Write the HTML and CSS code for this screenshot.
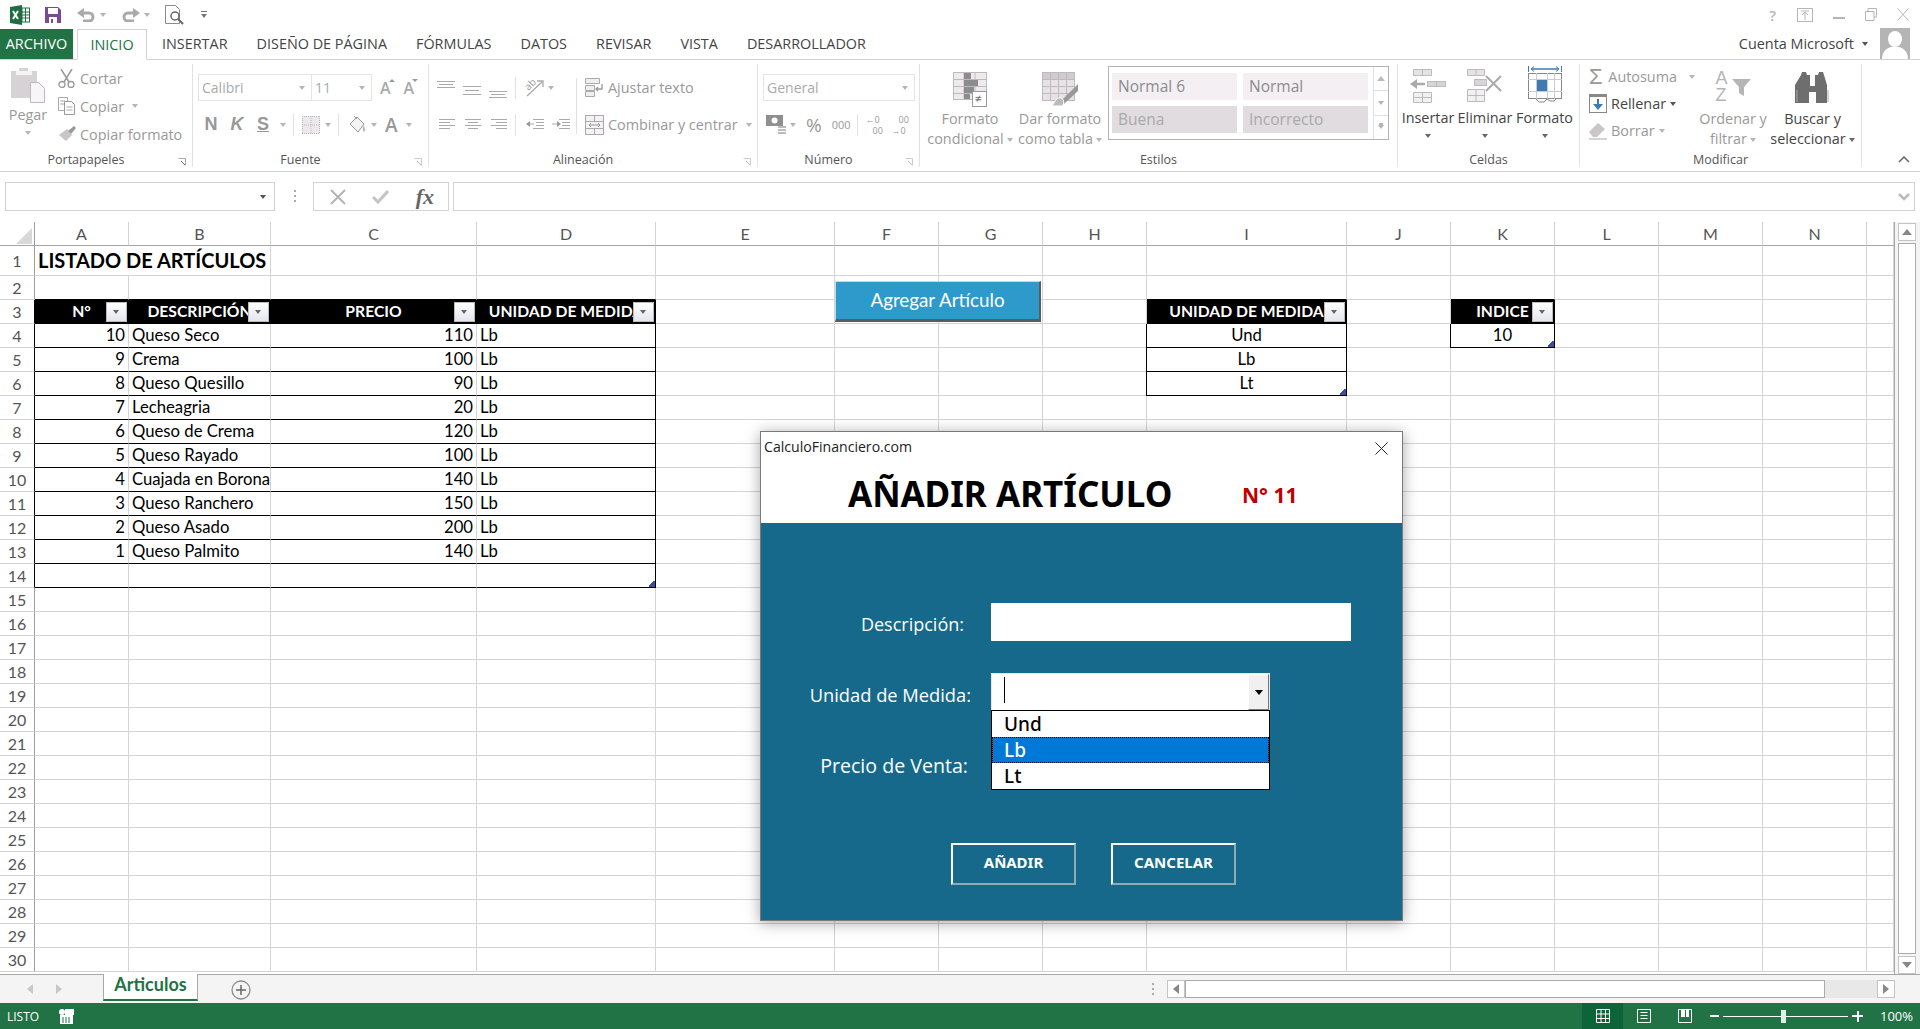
FILE: index.html
```html
<!DOCTYPE html>
<html lang="es">
<head>
    <meta charset="UTF-8">
    <title>Listado de Artículos - Excel</title>
    <link rel="stylesheet" href="styles.css">
</head>
<body>
    <!-- barra de titulo -->
    <div class="titlebar">
        <svg class="ml10" width="20" height="20" viewBox="0 0 20 20"><polygon points="0,2 12,0 12,20 0,18" fill="#1f6e43"/><rect x="12" y="3" width="7.5" height="14" fill="#fff" stroke="#1f6e43"/><path d="M12 7h7M12 10h7M12 13h7M15.500 3v14" stroke="#1f6e43"/><path d="M3 6l5 8M8 6l-5 8" stroke="#fff" stroke-width="2"/></svg>
        <svg class="ml15" width="16" height="16" viewBox="0 0 16 16"><path d="M0 0h13l3 3v13H0z" fill="#7a4b94"/><rect x="3" y="1" width="10" height="6" fill="#fff"/><rect x="4" y="10" width="8" height="6" fill="#fff"/><rect x="6" y="12" width="2" height="4" fill="#7a4b94"/></svg>
        <svg class="ml16" width="19" height="14" viewBox="0 0 19 14"><path d="M3 5h9a4 4 0 0 1 0 8H6" fill="none" stroke="#aaa" stroke-width="3"/><polygon points="0,5 7,0 7,10" fill="#aaa"/></svg>
        <span class="caret ml4"></span>
        <svg class="ml15" width="19" height="14" viewBox="0 0 19 14"><path d="M16 5H7a4 4 0 0 0 0 8h6" fill="none" stroke="#aaa" stroke-width="3"/><polygon points="19,5 12,0 12,10" fill="#aaa"/></svg>
        <span class="caret ml4"></span>
        <svg class="ml15" width="20" height="20" viewBox="0 0 20 20"><path d="M.500 .500h10l4 4v14H.500z" fill="#fff" stroke="#8c8c8c"/><circle cx="10" cy="11" r="4" fill="#fff" stroke="#666" stroke-width="1.500"/><path d="M13 14l5 5" stroke="#666" stroke-width="2"/></svg>
        <svg class="ml15" width="8" height="9" viewBox="0 0 8 9"><path d="M1 1.500h6" stroke="#777"/><polygon points="1,4 7,4 4,8" fill="#777"/></svg>
        <div class="window-btns">
            <span class="help">?</span>
            <svg width="16" height="14" viewBox="0 0 16 14"><rect x=".500" y=".500" width="15" height="13" fill="none" stroke="#b5b5b5"/><path d="M4 3h8M8 4v8M5 7l3-3 3 3" fill="none" stroke="#b5b5b5"/></svg>
            <svg width="12" height="14" viewBox="0 0 12 14"><path d="M0 10h12" stroke="#b5b5b5" stroke-width="2"/></svg>
            <svg width="12" height="13" viewBox="0 0 12 13"><path d="M3 3V.500h8.500V9H9M.500 3.500H9v9H.500z" fill="none" stroke="#b5b5b5"/></svg>
            <svg width="12" height="13" viewBox="0 0 12 13"><path d="M.500 .500l11 12M11.500 .500l-11 12" stroke="#b5b5b5"/></svg>
        </div>
    </div>

    <!-- pestañas de la cinta -->
    <div class="tabs">
        <div class="tab-file">ARCHIVO</div>
        <div class="tab-active">INICIO</div>
        <div class="tab-list">
            <span>INSERTAR</span>
            <span>DISEÑO DE PÁGINA</span>
            <span>FÓRMULAS</span>
            <span>DATOS</span>
            <span>REVISAR</span>
            <span>VISTA</span>
            <span>DESARROLLADOR</span>
        </div>
        <div class="account">
            <span>Cuenta Microsoft</span>
            <span class="caret dark"></span>
            <svg class="avatar" width="30" height="31" viewBox="0 0 30 31"><rect width="30" height="31" fill="#b4b4b4"/><ellipse cx="15" cy="11" rx="7" ry="8" fill="#fff"/><path d="M2 31c0-8 5-11 9-12h8c4 1 9 4 9 12z" fill="#fff"/></svg>
        </div>
    </div>

    <!-- cinta -->
    <div class="ribbon">
        <div class="group g-clip">
            <div class="group-body">
                <div class="big pegar">
                    <svg width="34" height="35" viewBox="0 0 34 35"><path d="M0 3h8V0h9v3h9v27H0z" fill="#d6d2d6"/><rect x="5" y="3" width="16" height="4" fill="#f4f4f4"/><path d="M19.500 14.500h8l6 6v14h-14z" fill="#f7f5f7" stroke="#bdb9bd"/></svg>
                    <div class="lbl">Pegar</div>
                    <span class="caret cap-big"></span>
                </div>
                <div class="clip-rows">
                    <div class="clip-row">
                        <svg width="17" height="19" viewBox="0 0 17 19"><path d="M3 0l8 13M14 0L6 13" stroke="#999" stroke-width="1.500"/><circle cx="4" cy="15.500" r="3" fill="none" stroke="#999" stroke-width="1.300"/><circle cx="13" cy="15.500" r="3" fill="none" stroke="#999" stroke-width="1.300"/></svg>
                        <span>Cortar</span>
                    </div>
                    <div class="clip-row">
                        <svg width="17" height="18" viewBox="0 0 17 18"><path d="M.500 .500h9v13h-9z" fill="#fff" stroke="#aaa"/><path d="M6.500 4.500h7l3 3v10h-10z" fill="#fff" stroke="#999"/><path d="M2 4h5M2 7h4M8.500 10h6M8.500 13h6" stroke="#aaa"/></svg>
                        <span>Copiar</span><span class="caret ml8"></span>
                    </div>
                    <div class="clip-row">
                        <svg width="20" height="16" viewBox="0 0 20 16"><polygon points="1,10 9,4 14,10 8,16" fill="#c9c5c9"/><path d="M10 6l6-5 2 2-5 6z" fill="#999"/></svg>
                        <span>Copiar formato</span>
                    </div>
                </div>
            </div>
            <div class="group-name launch">Portapapeles<svg class="launcher" width="8" height="8" viewBox="0 0 8 8"><path d="M.500 .500h7v7" fill="none" stroke="#aaa"/><path d="M3 3l4 4" stroke="#666"/></svg></div>
        </div>

        <div class="group g-font">
            <div class="group-body rows">
                <div class="row">
                    <div class="select font-name">Calibri<span class="caret"></span></div>
                    <div class="select font-size">11<span class="caret"></span></div>
                    <span class="grow-a ml8">A<i class="up"></i></span>
                    <span class="grow-a small ml13">A<i class="down"></i></span>
                </div>
                <div class="row">
                    <b class="fmt">N</b>
                    <b class="fmt it">K</b>
                    <b class="fmt un">S</b>
                    <span class="caret ml4"></span>
                    <span class="vsep sep-a"></span>
                    <svg class="ml8" width="18" height="18" viewBox="0 0 18 18"><rect width="18" height="18" fill="#ece8ec"/><path d="M.500 0v18M17.500 0v18M0 .500h18M0 17.500h18M9 0v18M0 9h18" stroke="#bbb" stroke-dasharray="1 1"/></svg>
                    <span class="caret ml5"></span>
                    <span class="vsep sep-b"></span>
                    <svg class="ml10" width="18" height="20" viewBox="0 0 18 20"><path d="M1 9l7-7 7 7-6 8z" fill="#f4f4f4" stroke="#999"/><path d="M5 1l3 3" stroke="#999"/><path d="M14 10c2 3 3 4 2 6s-3 0-2-6z" fill="#bbb"/></svg>
                    <span class="caret ml4"></span>
                    <span class="big-a ml8">A</span>
                    <span class="caret ml8"></span>
                </div>
            </div>
            <div class="group-name launch">Fuente<svg class="launcher" width="8" height="8" viewBox="0 0 8 8"><path d="M.500 .500h7v7" fill="none" stroke="#ccc"/><path d="M3 3l4 4" stroke="#bbb"/></svg></div>
        </div>

        <div class="group g-align">
            <div class="group-body">
                <div class="align-left rows">
                    <div class="row">
                        <svg width="18" height="22" viewBox="0 0 18 22"><path d="M0 4.500h18M2 7.500h14M0 10.500h18" stroke="#aaa"/></svg>
                        <svg class="ml8" width="18" height="22" viewBox="0 0 18 22"><path d="M0 9.500h18M2 13.500h14M0 17.500h18" stroke="#aaa"/></svg>
                        <svg class="ml8" width="18" height="22" viewBox="0 0 18 22"><path d="M0 14.500h18M2 17.500h14M0 20.500h18" stroke="#aaa"/></svg>
                        <span class="vsep ml8"></span>
                        <div class="orient ml8">
                            <svg width="20" height="20" viewBox="0 0 20 20"><path d="M3 18L18 4M13 3h6v6" fill="none" stroke="#aaa" stroke-width="1.300"/></svg>
                            <span>ab</span>
                        </div>
                        <span class="caret ml4"></span>
                    </div>
                    <div class="row row-2">
                        <svg class="ml2" width="16" height="14" viewBox="0 0 16 14"><path d="M0 1.500h16M0 4.500h11M0 7.500h16M0 10.500h11" stroke="#aaa"/></svg>
                        <svg class="ml10" width="16" height="14" viewBox="0 0 16 14"><path d="M0 1.500h16M3 4.500h10M0 7.500h16M3 10.500h10" stroke="#aaa"/></svg>
                        <svg class="ml10" width="16" height="14" viewBox="0 0 16 14"><path d="M0 1.500h16M5 4.500h11M0 7.500h16M5 10.500h11" stroke="#aaa"/></svg>
                        <span class="vsep ml8"></span>
                        <svg class="ml10" width="18" height="14" viewBox="0 0 18 14"><path d="M7 1.500h11M10 4.500h8M10 7.500h8M7 10.500h11M1 6h7" stroke="#aaa"/><polygon points="0,6 4,3 4,9" fill="#999"/></svg>
                        <svg class="ml8" width="18" height="14" viewBox="0 0 18 14"><path d="M7 1.500h11M10 4.500h8M10 7.500h8M7 10.500h11M0 6h7" stroke="#aaa"/><polygon points="9,6 5,3 5,9" fill="#999"/></svg>
                    </div>
                </div>
                <span class="vsep tall"></span>
                <div class="align-right rows">
                    <div class="row">
                        <svg width="19" height="19" viewBox="0 0 19 19"><path d="M.500 .500h14v5h-14zM.500 7.500h9v5h-9zM.500 13.500h9v5h-9z" fill="#f0eef0" stroke="#aaa"/><path d="M17 6v5h-6M13 9l-2 2 2 2" fill="none" stroke="#999" stroke-width="1.300"/></svg>
                        <span class="ml4">Ajustar texto</span>
                    </div>
                    <div class="row row-2">
                        <svg width="19" height="20" viewBox="0 0 19 20"><rect x=".500" y=".500" width="18" height="19" fill="#f4f2f4" stroke="#aaa"/><path d="M0 6.500h19M0 13.500h19M9.500 0v6M9.500 14v6" stroke="#aaa"/><path d="M4 10h11M6 8l-2 2 2 2M13 8l2 2-2 2" fill="none" stroke="#999"/></svg>
                        <span class="ml4">Combinar y centrar</span>
                        <span class="caret ml8"></span>
                    </div>
                </div>
            </div>
            <div class="group-name launch">Alineación<svg class="launcher" width="8" height="8" viewBox="0 0 8 8"><path d="M.500 .500h7v7" fill="none" stroke="#ccc"/><path d="M3 3l4 4" stroke="#bbb"/></svg></div>
        </div>

        <div class="group g-num">
            <div class="group-body rows">
                <div class="row">
                    <div class="select num-format">General<span class="caret"></span></div>
                </div>
                <div class="row">
                    <svg class="ml3" width="20" height="20" viewBox="0 0 20 20"><rect width="17" height="11" fill="#8f8f8f"/><circle cx="8.500" cy="5.500" r="3" fill="#fff"/><path d="M12 12h8M12 15h8M12 18h8" stroke="#bbb" stroke-width="2"/></svg>
                    <span class="caret ml4"></span>
                    <span class="pct ml10">%</span>
                    <span class="thou ml10">000</span>
                    <span class="vsep ml6"></span>
                    <span class="dec ml8"><i>←0</i><i class="push">00</i></span>
                    <span class="dec ml6"><i class="push">00</i><i>→0</i></span>
                </div>
            </div>
            <div class="group-name launch">Número<svg class="launcher" width="8" height="8" viewBox="0 0 8 8"><path d="M.500 .500h7v7" fill="none" stroke="#ccc"/><path d="M3 3l4 4" stroke="#bbb"/></svg></div>
        </div>

        <div class="group g-styles">
            <div class="group-body">
                <div class="big cond">
                    <div class="cond-ico">
                        <svg width="34" height="35" viewBox="0 0 34 35"><rect x=".500" y=".500" width="33" height="27" fill="#eeeaee" stroke="#bdb9bd"/><path d="M0 7.500h34M0 14.500h34M0 21.500h34M11 0v28M22 0v28" stroke="#bdb9bd"/><rect x="11" y="1" width="7" height="6" fill="#8c8c8c"/><rect x="11" y="8" width="14" height="6" fill="#8c8c8c"/><rect x="11" y="15" width="10" height="6" fill="#8c8c8c"/><rect x="11" y="22" width="6" height="5" fill="#8c8c8c"/><rect x="19.500" y="19.500" width="14" height="15" fill="#fff" stroke="#999"/></svg>
                        <span>≠</span>
                    </div>
                    <div class="lbl">Formato</div>
                    <div class="lbl">condicional<span class="caret ml3"></span></div>
                </div>
                <div class="big dar">
                    <svg width="37" height="35" viewBox="0 0 37 35"><rect x=".500" y=".500" width="32" height="28" fill="#e6e2e6" stroke="#bdb9bd"/><rect x="1" y="1" width="31" height="6" fill="#cfcbcf"/><path d="M0 7.500h33M0 14.500h33M0 21.500h33M8.500 0v29M16.500 0v29M24.500 0v29" stroke="#bdb9bd"/><path d="M36 12L19 29l3 3 14-13z" fill="#999"/><path d="M10 34c4-6 5-9 9-8 4 2 3 6 1 8z" fill="#bbb" stroke="#fff"/></svg>
                    <div class="lbl">Dar formato</div>
                    <div class="lbl">como tabla<span class="caret ml3"></span></div>
                </div>
                <div class="gallery">
                    <div class="style-grid">
                        <div class="style-cell">Normal 6</div>
                        <div class="style-cell">Normal</div>
                        <div class="style-cell shade">Buena</div>
                        <div class="style-cell shade">Incorrecto</div>
                    </div>
                    <div class="gallery-scroll">
                        <span><i class="tri-up"></i></span>
                        <span><i class="caret"></i></span>
                        <span><i class="caret lined"></i></span>
                    </div>
                </div>
            </div>
            <div class="group-name">Estilos</div>
        </div>

        <div class="group g-cells">
            <div class="group-body">
                <div class="big ins dark-text">
                    <svg width="36" height="34" viewBox="0 0 36 34"><path d="M3.500 .500h18v6h-18zM12.500 0v6" fill="#e6e2e6" stroke="#bbb"/><rect x="17.500" y="12.500" width="18" height="5" fill="#d8d4d8" stroke="#bbb"/><path d="M26.500 12v6" stroke="#bbb"/><path d="M15 15H3" stroke="#aaa" stroke-width="2.500"/><polygon points="0,15 7,10 7,20" fill="#aaa"/><path d="M3.500 23.500h18v10h-18zM3.500 28.500h18M12.500 23v11" fill="#f2f0f2" stroke="#bbb"/></svg>
                    <div class="lbl">Insertar</div>
                    <span class="caret mid"></span>
                </div>
                <div class="big eli dark-text">
                    <svg width="36" height="34" viewBox="0 0 36 34"><path d="M.500 .500h17v6h-17zM9 0v6" fill="#e6e2e6" stroke="#bbb"/><rect x="7.500" y="10.500" width="12" height="6" fill="#d8d4d8" stroke="#bbb"/><path d="M.500 20.500h17v12h-17zM.500 26.500h17M9 20v12" fill="#f2f0f2" stroke="#bbb"/><path d="M19 7l15 15M34 7L19 22" stroke="#aaa" stroke-width="2"/></svg>
                    <div class="lbl">Eliminar</div>
                    <span class="caret mid"></span>
                </div>
                <div class="big fmtb dark-text">
                    <svg width="34" height="38" viewBox="0 0 34 38"><path d="M.500 1v6M33.500 1v6" stroke="#3f7ab3"/><path d="M4 4h26" stroke="#3f7ab3" stroke-width="1.500"/><path d="M6 1.500L3 4l3 2.500M28 1.500L31 4l-3 2.500" fill="none" stroke="#3f7ab3"/><rect x=".500" y="8.500" width="33" height="25" fill="#fff" stroke="#888"/><path d="M0 14.500h34M0 26.500h34M8.500 8v26M19.500 8v26M26.500 8v26" stroke="#ccc"/><rect x="9" y="15" width="10" height="11" fill="#3f7ab3"/><path d="M8 34l3 3h5l3-3M19 34l3 2h4l2-2" fill="none" stroke="#888"/></svg>
                    <div class="lbl">Formato</div>
                    <span class="caret mid"></span>
                </div>
            </div>
            <div class="group-name">Celdas</div>
        </div>

        <div class="group g-edit">
            <div class="group-body">
                <div class="edit-rows">
                    <div class="edit-row edit-off">
                        <span class="sigma">Σ</span>
                        <span>Autosuma</span><span class="caret ml8"></span>
                    </div>
                    <div class="edit-row edit-on">
                        <svg width="18" height="19" viewBox="0 0 18 19"><rect x=".500" y=".500" width="17" height="18" fill="#fff" stroke="#888"/><rect y="0" width="18" height="3" fill="#888"/><path d="M9 5v9" stroke="#3f7ab3" stroke-width="2"/><polygon points="4,10 14,10 9,16" fill="#3f7ab3"/></svg>
                        <span>Rellenar</span><span class="caret dark"></span>
                    </div>
                    <div class="edit-row edit-off">
                        <svg width="18" height="18" viewBox="0 0 18 18"><path d="M0 10L9 1l7 6-8 8H4z" fill="#c9c5c9"/><path d="M0 17h18" stroke="#aaa"/></svg>
                        <span>Borrar</span><span class="caret"></span>
                    </div>
                </div>
                <div class="big sort">
                    <div class="az-ico">
                        <div class="az"><span>A</span><span>Z</span></div>
                        <svg width="19" height="17" viewBox="0 0 19 17"><polygon points="0,0 19,0 12,8 12,17 7,14 7,8" fill="#b5b5b5"/></svg>
                    </div>
                    <div class="lbl">Ordenar y</div>
                    <div class="lbl">filtrar<span class="caret ml3"></span></div>
                </div>
                <div class="big find dark-text">
                    <svg width="35" height="33" viewBox="0 0 35 33"><path d="M6 5l1-3h4l1 3h3v11h5V5h3l1-3h4l1 3 3 10v18H21V22h-7v11H0V15z" fill="#6e6e6e"/><path d="M2 20v12M33 20v12" stroke="#aaa"/></svg>
                    <div class="lbl">Buscar y</div>
                    <div class="lbl">seleccionar<span class="caret dark ml3"></span></div>
                </div>
            </div>
            <div class="group-name">Modificar</div>
        </div>

        <svg class="collapse" width="12" height="7" viewBox="0 0 12 7"><path d="M1 6l5-5 5 5" fill="none" stroke="#666" stroke-width="1.500"/></svg>
    </div>

    <!-- barra de formulas -->
    <div class="formula-bar">
        <div class="name-box"><span class="caret dark"></span></div>
        <span class="vdots"></span>
        <div class="fx-box">
            <svg width="16" height="16" viewBox="0 0 16 16"><path d="M1 1l14 14M15 1L1 15" stroke="#b5b5b5" stroke-width="2"/></svg>
            <svg width="17" height="15" viewBox="0 0 17 15"><path d="M1 8l5 5L16 2" fill="none" stroke="#c4c4c4" stroke-width="3"/></svg>
            <span class="fx">fx</span>
        </div>
        <div class="formula-input">
            <svg width="12" height="8" viewBox="0 0 12 8"><path d="M1 1l5 5 5-5" fill="none" stroke="#bbb" stroke-width="2.500"/></svg>
        </div>
    </div>

    <!-- hoja -->
    <div class="sheet">
        <div class="grid-wrap">
            <table class="grid">
                <colgroup>
                    <col class="c-head"><col class="c-a"><col class="c-b"><col class="c-c"><col class="c-d"><col class="c-e"><col class="c-f"><col class="c-f"><col class="c-f"><col class="c-i"><col class="c-f"><col class="c-f"><col class="c-f"><col class="c-f"><col class="c-f"><col class="c-o">
                </colgroup>
                <thead>
                    <tr>
                        <th class="corner"><svg width="16" height="16" viewBox="0 0 16 16"><polygon points="16,0 16,16 0,16" fill="#d8d8d8"/></svg></th>
                        <th>A</th><th>B</th><th>C</th><th>D</th><th>E</th><th>F</th><th>G</th><th>H</th><th>I</th><th>J</th><th>K</th><th>L</th><th>M</th><th>N</th><th></th>
                    </tr>
                </thead>
                <tbody>
                    <tr class="r-title"><th>1</th><td colspan="2" class="title">LISTADO DE ARTÍCULOS</td><td></td><td></td><td></td><td></td><td></td><td></td><td></td><td></td><td></td><td></td><td></td><td></td><td></td></tr>
                    <tr><th>2</th><td class="bk"></td><td class="bk"></td><td class="bk"></td><td class="bk"></td><td></td><td></td><td></td><td></td><td class="bk"></td><td></td><td class="bk"></td><td></td><td></td><td></td><td></td></tr>
                    <tr><th class="edge">3</th><td class="hd">N°<span class="filter"></span></td><td class="hd">DESCRIPCIÓN<span class="filter"></span></td><td class="hd">PRECIO<span class="filter"></span></td><td class="hd">UNIDAD DE MEDIDA<span class="filter"></span></td><td></td><td></td><td></td><td></td><td class="hd">UNIDAD DE MEDIDA<span class="filter"></span></td><td></td><td class="hd">INDICE<span class="filter"></span></td><td></td><td></td><td></td><td></td></tr>
                    <tr><th class="edge">4</th><td class="bk n">10</td><td class="bk">Queso Seco</td><td class="bk n">110</td><td class="bk br">Lb</td><td></td><td></td><td></td><td></td><td class="bk br bl ctr">Und</td><td></td><td class="bk br bl ctr grip">10</td><td></td><td></td><td></td><td></td></tr>
                    <tr><th class="edge">5</th><td class="bk n">9</td><td class="bk">Crema</td><td class="bk n">100</td><td class="bk br">Lb</td><td></td><td></td><td></td><td></td><td class="bk br bl ctr">Lb</td><td></td><td></td><td></td><td></td><td></td><td></td></tr>
                    <tr><th class="edge">6</th><td class="bk n">8</td><td class="bk">Queso Quesillo</td><td class="bk n">90</td><td class="bk br">Lb</td><td></td><td></td><td></td><td></td><td class="bk br bl ctr grip">Lt</td><td></td><td></td><td></td><td></td><td></td><td></td></tr>
                    <tr><th class="edge">7</th><td class="bk n">7</td><td class="bk">Lecheagria</td><td class="bk n">20</td><td class="bk br">Lb</td><td></td><td></td><td></td><td></td><td></td><td></td><td></td><td></td><td></td><td></td><td></td></tr>
                    <tr><th class="edge">8</th><td class="bk n">6</td><td class="bk">Queso de Crema</td><td class="bk n">120</td><td class="bk br">Lb</td><td></td><td></td><td></td><td></td><td></td><td></td><td></td><td></td><td></td><td></td><td></td></tr>
                    <tr><th class="edge">9</th><td class="bk n">5</td><td class="bk">Queso Rayado</td><td class="bk n">100</td><td class="bk br">Lb</td><td></td><td></td><td></td><td></td><td></td><td></td><td></td><td></td><td></td><td></td><td></td></tr>
                    <tr><th class="edge">10</th><td class="bk n">4</td><td class="bk">Cuajada en Borona</td><td class="bk n">140</td><td class="bk br">Lb</td><td></td><td></td><td></td><td></td><td></td><td></td><td></td><td></td><td></td><td></td><td></td></tr>
                    <tr><th class="edge">11</th><td class="bk n">3</td><td class="bk">Queso Ranchero</td><td class="bk n">150</td><td class="bk br">Lb</td><td></td><td></td><td></td><td></td><td></td><td></td><td></td><td></td><td></td><td></td><td></td></tr>
                    <tr><th class="edge">12</th><td class="bk n">2</td><td class="bk">Queso Asado</td><td class="bk n">200</td><td class="bk br">Lb</td><td></td><td></td><td></td><td></td><td></td><td></td><td></td><td></td><td></td><td></td><td></td></tr>
                    <tr><th class="edge">13</th><td class="bk n">1</td><td class="bk">Queso Palmito</td><td class="bk n">140</td><td class="bk br">Lb</td><td></td><td></td><td></td><td></td><td></td><td></td><td></td><td></td><td></td><td></td><td></td></tr>
                    <tr><th class="edge">14</th><td class="bk"></td><td class="bk"></td><td class="bk"></td><td class="bk br grip"></td><td></td><td></td><td></td><td></td><td></td><td></td><td></td><td></td><td></td><td></td><td></td></tr>
                    <tr><th>15</th><td></td><td></td><td></td><td></td><td></td><td></td><td></td><td></td><td></td><td></td><td></td><td></td><td></td><td></td><td></td></tr>
                    <tr><th>16</th><td></td><td></td><td></td><td></td><td></td><td></td><td></td><td></td><td></td><td></td><td></td><td></td><td></td><td></td><td></td></tr>
                    <tr><th>17</th><td></td><td></td><td></td><td></td><td></td><td></td><td></td><td></td><td></td><td></td><td></td><td></td><td></td><td></td><td></td></tr>
                    <tr><th>18</th><td></td><td></td><td></td><td></td><td></td><td></td><td></td><td></td><td></td><td></td><td></td><td></td><td></td><td></td><td></td></tr>
                    <tr><th>19</th><td></td><td></td><td></td><td></td><td></td><td></td><td></td><td></td><td></td><td></td><td></td><td></td><td></td><td></td><td></td></tr>
                    <tr><th>20</th><td></td><td></td><td></td><td></td><td></td><td></td><td></td><td></td><td></td><td></td><td></td><td></td><td></td><td></td><td></td></tr>
                    <tr><th>21</th><td></td><td></td><td></td><td></td><td></td><td></td><td></td><td></td><td></td><td></td><td></td><td></td><td></td><td></td><td></td></tr>
                    <tr><th>22</th><td></td><td></td><td></td><td></td><td></td><td></td><td></td><td></td><td></td><td></td><td></td><td></td><td></td><td></td><td></td></tr>
                    <tr><th>23</th><td></td><td></td><td></td><td></td><td></td><td></td><td></td><td></td><td></td><td></td><td></td><td></td><td></td><td></td><td></td></tr>
                    <tr><th>24</th><td></td><td></td><td></td><td></td><td></td><td></td><td></td><td></td><td></td><td></td><td></td><td></td><td></td><td></td><td></td></tr>
                    <tr><th>25</th><td></td><td></td><td></td><td></td><td></td><td></td><td></td><td></td><td></td><td></td><td></td><td></td><td></td><td></td><td></td></tr>
                    <tr><th>26</th><td></td><td></td><td></td><td></td><td></td><td></td><td></td><td></td><td></td><td></td><td></td><td></td><td></td><td></td><td></td></tr>
                    <tr><th>27</th><td></td><td></td><td></td><td></td><td></td><td></td><td></td><td></td><td></td><td></td><td></td><td></td><td></td><td></td><td></td></tr>
                    <tr><th>28</th><td></td><td></td><td></td><td></td><td></td><td></td><td></td><td></td><td></td><td></td><td></td><td></td><td></td><td></td><td></td></tr>
                    <tr><th>29</th><td></td><td></td><td></td><td></td><td></td><td></td><td></td><td></td><td></td><td></td><td></td><td></td><td></td><td></td><td></td></tr>
                    <tr><th>30</th><td></td><td></td><td></td><td></td><td></td><td></td><td></td><td></td><td></td><td></td><td></td><td></td><td></td><td></td><td></td></tr>
                </tbody>
            </table>
            <div class="shape-btn">Agregar Artículo</div>
        </div>
        <div class="vscroll">
            <span class="sb-btn"><i class="tri-up"></i></span>
            <span class="sb-thumb"></span>
            <span class="sb-btn"><i class="tri-down"></i></span>
        </div>
    </div>

    <!-- pestañas de hojas -->
    <div class="sheet-tabs">
        <i class="nav-left"></i>
        <i class="nav-right"></i>
        <div class="sheet-tab">Articulos</div>
        <svg class="add-sheet" width="20" height="20" viewBox="0 0 20 20"><circle cx="10" cy="10" r="9" fill="none" stroke="#8c8c8c" stroke-width="1.300"/><path d="M10 5v10M5 10h10" stroke="#666" stroke-width="1.500"/></svg>
        <span class="vdots tab-dots"></span>
        <div class="hscroll">
            <span class="sb-btn"><i class="tri-left"></i></span>
            <span class="hs-thumb"></span>
            <span class="sb-btn"><i class="tri-right"></i></span>
        </div>
    </div>

    <!-- barra de estado -->
    <div class="statusbar">
        <span class="ready">LISTO</span>
        <svg class="ml20" width="15" height="15" viewBox="0 0 15 15"><circle cx="3" cy="3" r="3" fill="#fff"/><path d="M0 6h15V0H6v6" fill="#fff"/><rect x="1" y="6" width="13" height="9" fill="#fff"/><path d="M3 9h9M3 11h9M3 13h9" stroke="#217346" stroke-dasharray="2 1"/></svg>
        <div class="status-right">
            <span class="view-btn on"><svg width="14" height="14" viewBox="0 0 14 14"><path d="M.500 .500h13v13H.500zM.500 5h13M.500 9.500h13M5 .500v13M9.500 .500v13" fill="none" stroke="#fff"/></svg></span>
            <span class="view-btn"><svg width="14" height="14" viewBox="0 0 14 14"><path d="M.500 .500h13v13H.500z" fill="none" stroke="#fff"/><path d="M3.500 3.500h7M3.500 6.500h7M3.500 9.500h7" stroke="#fff"/></svg></span>
            <span class="view-btn"><svg width="14" height="14" viewBox="0 0 14 14"><path d="M.500 .500h13v13H.500z" fill="none" stroke="#fff"/><path d="M3 0h4v8H3zM8 0h3v8H8z" fill="#fff"/></svg></span>
            <span class="zoom-minus"></span>
            <div class="zoom-track"><span class="zoom-knob"></span></div>
            <span class="zoom-plus"></span>
            <span class="zoom-val">100%</span>
        </div>
    </div>

    <!-- formulario -->
    <div class="dialog">
        <div class="dialog-title">
            <span>CalculoFinanciero.com</span>
            <svg width="13" height="13" viewBox="0 0 13 13"><path d="M.500 .500l12 12M12.500 .500l-12 12" stroke="#222"/></svg>
        </div>
        <div class="dialog-head">
            <span class="dialog-h">AÑADIR ARTÍCULO</span>
            <span class="dialog-n">N° 11</span>
        </div>
        <div class="dialog-body">
            <div class="form-row">
                <label class="lb-desc">Descripción:</label>
                <div class="inp"></div>
            </div>
            <div class="form-row">
                <label class="lb-unit">Unidad de Medida:</label>
                <div class="combo">
                    <span class="text-cursor"></span>
                    <span class="combo-btn"><i></i></span>
                    <ul class="combo-list">
                        <li>Und</li>
                        <li class="sel">Lb</li>
                        <li>Lt</li>
                    </ul>
                </div>
            </div>
            <div class="form-row">
                <label class="lb-price">Precio de Venta:</label>
                <div class="inp short"></div>
            </div>
            <div class="dialog-btns">
                <div class="dlg-btn">AÑADIR</div>
                <div class="dlg-btn">CANCELAR</div>
            </div>
        </div>
    </div>
</body>
</html>
```

FILE: styles.css
```css
* {
    box-sizing: border-box;
}
html, body {
    margin: 0;
    padding: 0;
    height: 1029px;
    overflow: hidden;
}
body {
    font-family: "Open Sans", "Liberation Sans", sans-serif;
    font-size: 14.4px;
    color: #444;
    background: #fff;
    display: flex;
    flex-direction: column;
    position: relative;
}
i {
    font-style: normal;
}
svg {
    display: block;
    flex: none;
}

/* margenes sueltos */
.ml2 { margin-left: 2px; }
.ml3 { margin-left: 3px; }
.ml4 { margin-left: 4px; }
.ml5 { margin-left: 5px; }
.ml6 { margin-left: 6px; }
.ml8 { margin-left: 8px; }
.ml10 { margin-left: 10px; }
.ml13 { margin-left: 13px; }
.ml15 { margin-left: 15px; }
.ml16 { margin-left: 16px; }
.ml20 { margin-left: 20px; }

.caret {
    display: inline-block;
    flex: none;
    width: 0;
    height: 0;
    border-left: 3.5px solid transparent;
    border-right: 3.5px solid transparent;
    border-top: 4px solid #b5b5b5;
    vertical-align: middle;
}
.caret.dark {
    border-top-color: #555;
}

/* barra de titulo */
.titlebar {
    height: 29px;
    display: flex;
    align-items: center;
    flex: none;
}
.window-btns {
    margin-left: auto;
    display: flex;
    align-items: center;
    gap: 20px;
    padding-right: 11px;
}
.help {
    color: #b5b5b5;
    font-size: 15px;
    font-weight: 600;
    margin-right: 1px;
}

/* pestañas */
.tabs {
    height: 31px;
    flex: none;
    display: flex;
    align-items: stretch;
    border-bottom: 1px solid #d4d4d4;
}
.tab-file {
    width: 73px;
    background: #217346;
    color: #fff;
    text-align: center;
    line-height: 30px;
}
.tab-active {
    width: 70px;
    height: 31px;
    margin-left: 4px;
    border: 1px solid #d4d4d4;
    border-bottom: 1px solid #fff;
    color: #217346;
    background: #fff;
    text-align: center;
    line-height: 29px;
}
.tab-list {
    margin-left: 15px;
    display: flex;
    gap: 29px;
    line-height: 30px;
}
.account {
    margin-left: auto;
    display: flex;
    align-items: center;
    gap: 8px;
    padding-right: 10px;
    line-height: 28px;
}
.avatar {
    margin-left: 4px;
    align-self: flex-end;
}

/* cinta */
.ribbon {
    height: 112px;
    flex: none;
    display: flex;
    border-bottom: 1px solid #d4d4d4;
    position: relative;
    color: #999;
}
.group {
    margin-top: 4px;
    height: 103px;
    border-right: 1px solid #e1e1e1;
    display: flex;
    flex-direction: column;
    flex: none;
}
.g-clip { width: 193px; }
.g-font { width: 236px; }
.g-align { width: 329px; }
.g-num { width: 162px; }
.g-styles { width: 478px; }
.g-cells { width: 182px; }
.g-edit { width: 282px; }
.group-body {
    height: 85px;
    display: flex;
    flex: none;
}
.group-name {
    position: relative;
    text-align: center;
    font-size: 12.5px;
    color: #555;
    line-height: 18px;
    margin-top: 2px;
}
.group-name.launch {
    padding-right: 20px;
}
.launcher {
    position: absolute;
    right: 6px;
    bottom: 3px;
}
.rows {
    flex-direction: column;
    padding-top: 10px;
    gap: 10px;
}
.row {
    height: 27px;
    display: flex;
    align-items: center;
    white-space: nowrap;
}
.vsep {
    display: block;
    flex: none;
    width: 1px;
    height: 22px;
    background: #e1e1e1;
}
.vsep.tall {
    height: 56px;
    margin-top: 14px;
}
.big {
    flex: none;
    display: flex;
    flex-direction: column;
    align-items: center;
    padding-top: 8px;
    white-space: nowrap;
}
.lbl {
    line-height: 20px;
}
.big svg + .lbl {
    margin-top: 2px;
}
.dark-text {
    color: #444;
}
.dark-text .caret {
    border-top-color: #666;
}
.caret.mid {
    margin-top: 6px;
}

/* portapapeles */
.pegar {
    width: 56px;
    padding-top: 4px;
}
.pegar .lbl {
    margin-top: 6px;
}
.cap-big {
    margin-top: 6px;
}
.clip-rows {
    display: flex;
    flex-direction: column;
}
.clip-row {
    height: 28px;
    display: flex;
    align-items: center;
    white-space: nowrap;
    position: relative;
    padding-left: 24px;
}
.clip-row svg {
    position: absolute;
    left: 2px;
    top: 5px;
}

/* fuente */
.g-font .rows {
    padding-left: 5px;
}
.select {
    height: 27px;
    border: 1px solid #e4e4e4;
    padding-left: 3px;
    display: flex;
    align-items: center;
    justify-content: space-between;
    padding-right: 6px;
    font-size: 14px;
    color: #aaa;
    flex: none;
}
.font-name { width: 114px; }
.font-size { width: 60px; border-left-width: 0; }
.num-format { width: 152px; }
.grow-a {
    position: relative;
    font-size: 16px;
    font-weight: 600;
    color: #aaa;
    line-height: 20px;
}
.grow-a i {
    position: absolute;
    right: -4px;
    top: 1px;
    border-left: 3px solid transparent;
    border-right: 3px solid transparent;
}
.grow-a .up { border-bottom: 3px solid #999; }
.grow-a .down { border-top: 3px solid #999; }
.fmt {
    width: 26px;
    text-align: center;
    font-size: 18px;
    font-family: "Liberation Sans", sans-serif;
    color: #999;
}
.fmt.it { font-style: italic; }
.fmt.un { text-decoration: underline; }
.sep-a { margin-left: 7px; }
.sep-b { margin-left: 7px; }
.big-a {
    font-size: 19px;
    font-weight: 600;
    color: #999;
}

/* alineacion */
.align-left {
    width: 147px;
    display: flex;
    padding-left: 8px;
}
.align-right {
    display: flex;
    padding-left: 8px;
}
.orient {
    position: relative;
    width: 20px;
    height: 20px;
    flex: none;
}
.orient span {
    position: absolute;
    left: 0;
    top: 0;
    font-size: 10px;
    line-height: 12px;
    transform: rotate(-45deg);
    color: #999;
}

/* numero */
.g-num .rows {
    padding-left: 5px;
}
.pct {
    font-size: 19px;
    line-height: 20px;
}
.thou {
    font-size: 11px;
}
.dec {
    display: flex;
    flex-direction: column;
    font-size: 9px;
    line-height: 11px;
    width: 20px;
    white-space: nowrap;
}
.dec .push {
    padding-left: 7px;
}

/* estilos */
.cond {
    width: 92px;
    margin-left: 4px;
}
.cond-ico {
    position: relative;
    width: 34px;
    height: 35px;
    margin-bottom: 2px;
}
.cond-ico span {
    position: absolute;
    left: 22px;
    top: 20px;
    font-size: 12px;
    line-height: 14px;
    color: #666;
}
.dar {
    width: 88px;
}
.gallery {
    margin: 2px 0 0 4px;
    width: 281px;
    height: 74px;
    border: 1px solid #b4b4b4;
    display: flex;
    flex: none;
}
.style-grid {
    display: grid;
    grid-template-columns: 125px 125px;
    grid-auto-rows: 27px;
    gap: 6px 6px;
    padding: 6px 0 0 3px;
    width: 264px;
    flex: none;
}
.style-cell {
    background: #f3eff3;
    padding-left: 6px;
    line-height: 26px;
    font-size: 15.5px;
    color: #8c8c8c;
}
.style-cell.shade {
    background: #e0dce0;
    color: #aaa;
}
.gallery-scroll {
    flex: 1;
    display: flex;
    flex-direction: column;
    border-left: 1px solid #e1e1e1;
}
.gallery-scroll span {
    flex: 1;
    display: flex;
    align-items: center;
    justify-content: center;
    border-bottom: 1px solid #e1e1e1;
}
.gallery-scroll span:last-child {
    border-bottom: none;
}
.caret.lined {
    box-shadow: 0 -3px 0 -1px #b5b5b5;
}
.tri-up {
    display: block;
    width: 0;
    height: 0;
    border-left: 4px solid transparent;
    border-right: 4px solid transparent;
    border-bottom: 5px solid #bbb;
}
.tri-down {
    display: block;
    width: 0;
    height: 0;
    border-left: 5px solid transparent;
    border-right: 5px solid transparent;
    border-top: 6px solid #888;
}
.tri-left {
    display: block;
    width: 0;
    height: 0;
    border-top: 5px solid transparent;
    border-bottom: 5px solid transparent;
    border-right: 6px solid #888;
}
.tri-right {
    display: block;
    width: 0;
    height: 0;
    border-top: 5px solid transparent;
    border-bottom: 5px solid transparent;
    border-left: 6px solid #888;
}

/* celdas */
.ins { width: 60px; padding-top: 5px; }
.eli { width: 54px; padding-top: 5px; }
.fmtb { width: 65px; padding-top: 1px; }
.ins svg + .lbl, .eli svg + .lbl { margin-top: 5px; }
.fmtb svg + .lbl { margin-top: 5px; }

/* modificar */
.edit-rows {
    width: 115px;
    padding-left: 9px;
    display: flex;
    flex-direction: column;
    margin-top: -1px;
}
.edit-row {
    height: 27px;
    display: flex;
    align-items: center;
    white-space: nowrap;
    gap: 4px;
}
.edit-on {
    color: #444;
}
.sigma {
    width: 18px;
    font-size: 22px;
    line-height: 22px;
    color: #999;
    font-family: "Liberation Sans", sans-serif;
}
.sort { width: 76px; padding-top: 6px; }
.find { width: 83px; padding-top: 6px; }
.find svg + .lbl { margin-top: 6px; }
.az-ico {
    display: flex;
    align-items: center;
    gap: 4px;
    height: 34px;
    margin-bottom: 5px;
}
.az {
    display: flex;
    flex-direction: column;
    font-size: 18px;
    line-height: 17px;
    color: #b5b5b5;
    font-family: "Liberation Sans", sans-serif;
}
.collapse {
    position: absolute;
    right: 10px;
    bottom: 8px;
}

/* barra de formulas */
.formula-bar {
    height: 50px;
    flex: none;
    padding: 10px 5px 11px 5px;
    display: flex;
    gap: 4px;
}
.name-box {
    width: 270px;
    border: 1px solid #d4d4d4;
    display: flex;
    align-items: center;
    justify-content: flex-end;
    padding-right: 8px;
}
.vdots {
    display: block;
    width: 2px;
    height: 12px;
    margin: 8px 13px 0 15px;
    background: repeating-linear-gradient(#aaa 0 2px, transparent 2px 5px);
    flex: none;
}
.fx-box {
    width: 136px;
    border: 1px solid #d4d4d4;
    display: flex;
    align-items: center;
    justify-content: space-between;
    padding: 0 14px 0 16px;
}
.fx {
    font-family: "Liberation Serif", serif;
    font-style: italic;
    font-weight: 700;
    font-size: 22px;
    color: #666;
}
.formula-input {
    flex: 1;
    border: 1px solid #d4d4d4;
    display: flex;
    align-items: center;
    justify-content: flex-end;
    padding-right: 4px;
}

/* hoja */
.sheet {
    height: 752px;
    flex: none;
    display: flex;
}
.grid-wrap {
    width: 1895px;
    position: relative;
    overflow: hidden;
    flex: none;
    border-right: 1px solid #a8a8a8;
}
.grid {
    table-layout: fixed;
    width: 1894px;
    border-collapse: separate;
    border-spacing: 0;
    font-family: Lato, "Liberation Sans", sans-serif;
    font-size: 16.7px;
    color: #000;
}
.c-head { width: 35px; }
.c-a { width: 94px; }
.c-b { width: 142px; }
.c-c { width: 206px; }
.c-d { width: 179px; }
.c-e { width: 179px; }
.c-f { width: 104px; }
.c-i { width: 200px; }
.c-o { width: 27px; }
.grid tr {
    height: 24px;
}
.grid tr.r-title {
    height: 30px;
}
.grid th {
    font-weight: 400;
    font-size: 16px;
    color: #555;
    padding: 0;
    text-align: center;
    border-right: 1px solid #9f9f9f;
    border-bottom: 1px solid #d4d4d4;
}
.grid thead th {
    border-right: 1px solid #d4d4d4;
    border-bottom: 1px solid #a4a4a4;
}
.grid thead th:first-child {
    border-right-color: #9f9f9f;
}
.corner svg {
    margin: 5px 0 0 16px;
}
.grid th.edge {
    border-right-color: #000;
}
.grid td {
    padding: 0 3px 2px 3px;
    border-right: 1px solid #d4d4d4;
    border-bottom: 1px solid #d4d4d4;
    white-space: nowrap;
    overflow: hidden;
    position: relative;
}
.grid td.title {
    font-size: 20px;
    font-weight: 700;
}
.grid td.bk {
    border-bottom-color: #000;
}
.grid td.br {
    border-right-color: #000;
}
.grid td.bl {
    box-shadow: -1px 0 0 #000;
    overflow: visible;
}
.grid td.n {
    text-align: right;
}
.grid td.ctr {
    text-align: center;
}
.grid td.hd {
    background: #000;
    color: #fff;
    font-weight: 700;
    text-align: center;
    border-right-color: #000;
    border-bottom-color: #000;
    font-size: 15.7px;
}
.filter {
    position: absolute;
    right: 1px;
    bottom: 1px;
    width: 21px;
    height: 20px;
    background: linear-gradient(#fff, #e4e6ee);
    border: 1px solid #bbb;
}
.filter::after {
    content: "";
    position: absolute;
    left: 6px;
    top: 7px;
    border-left: 3.5px solid transparent;
    border-right: 3.5px solid transparent;
    border-top: 4px solid #666;
}
.grip::after {
    content: "";
    position: absolute;
    right: 0;
    bottom: 0;
    width: 6px;
    height: 6px;
    background: linear-gradient(135deg, transparent 35%, #3f4f9f 35%);
}

/* boton de la hoja */
.shape-btn {
    position: absolute;
    left: 835px;
    top: 59px;
    width: 206px;
    height: 41px;
    background: #2e9acb;
    color: #fff;
    font-family: Lato, "Liberation Sans", sans-serif;
    font-size: 18.8px;
    line-height: 35px;
    text-align: center;
    border-right: 2px solid #5c5c5c;
    border-bottom: 3px solid #5c5c5c;
    border-left: 1px solid #bcdcec;
    border-top: 1px solid #bcdcec;
}

/* barras de desplazamiento */
.vscroll {
    flex: 1;
    display: flex;
    flex-direction: column;
    padding: 1px 4px 0 3px;
    background: #f4f4f4;
}
.sb-btn {
    width: 18px;
    height: 18px;
    background: #fff;
    border: 1px solid #c4c4c4;
    display: flex;
    align-items: center;
    justify-content: center;
    flex: none;
}
.vscroll .sb-btn .tri-up {
    border-left-width: 5px;
    border-right-width: 5px;
    border-bottom: 6px solid #888;
}
.sb-thumb {
    flex: 1;
    margin: 2px 0;
    background: #fff;
    border: 1px solid #ababab;
}

/* pestañas de hojas */
.sheet-tabs {
    height: 29px;
    flex: none;
    border-top: 1px solid #a8a8a8;
    background: #f4f4f4;
    display: flex;
    position: relative;
}
.nav-left, .nav-right {
    display: block;
    width: 0;
    height: 0;
    margin-top: 9px;
    border-top: 5px solid transparent;
    border-bottom: 5px solid transparent;
}
.nav-left {
    margin-left: 27px;
    border-right: 6px solid #c8c8c8;
}
.nav-right {
    margin-left: 23px;
    border-left: 6px solid #c8c8c8;
}
.sheet-tab {
    margin-left: 41px;
    margin-top: -1px;
    width: 95px;
    height: 27px;
    background: #fff;
    border: 1px solid #a8a8a8;
    border-top: none;
    border-bottom: 2px solid #217346;
    color: #217346;
    font-family: Lato, "Liberation Sans", sans-serif;
    font-weight: 700;
    font-size: 18px;
    text-align: center;
    line-height: 21px;
}
.add-sheet {
    margin: 5px 0 0 33px;
}
.tab-dots {
    position: absolute;
    left: 1137px;
    top: 0;
}
.hscroll {
    position: absolute;
    left: 1167px;
    top: 5px;
    width: 728px;
    height: 18px;
    display: flex;
    background: #e8e8e8;
}
.hs-thumb {
    width: 640px;
    background: #fff;
    border: 1px solid #ababab;
    margin-right: 52px;
}

/* barra de estado */
.statusbar {
    height: 26px;
    flex: none;
    background: #217346;
    color: #fff;
    display: flex;
    align-items: center;
    padding-left: 7px;
    font-size: 12px;
}
.status-right {
    margin-left: auto;
    display: flex;
    align-items: center;
    height: 100%;
}
.view-btn {
    width: 41px;
    height: 100%;
    display: flex;
    align-items: center;
    justify-content: center;
}
.view-btn.on {
    background: #0f6338;
}
.zoom-minus {
    width: 9px;
    height: 2px;
    margin-left: 5px;
    background: #fff;
}
.zoom-track {
    width: 125px;
    height: 1px;
    margin-left: 4px;
    background: #fff;
    position: relative;
}
.zoom-knob {
    position: absolute;
    left: 58px;
    top: -6px;
    width: 5px;
    height: 13px;
    background: #dff0e6;
}
.zoom-plus {
    width: 11px;
    height: 11px;
    margin-left: 4px;
    background: linear-gradient(#fff, #fff) center / 100% 2px no-repeat, linear-gradient(#fff, #fff) center / 2px 100% no-repeat;
}
.zoom-val {
    margin-left: 17px;
    width: 40px;
    font-size: 13px;
}

/* formulario */
.dialog {
    position: absolute;
    left: 760px;
    top: 431px;
    width: 643px;
    height: 490px;
    background: #fff;
    border: 1px solid #7a7a7a;
    box-shadow: 0 2px 14px rgba(0,0,0,0.35);
    display: flex;
    flex-direction: column;
}
.dialog-title {
    height: 29px;
    margin-bottom: 4px;
    flex: none;
    display: flex;
    align-items: center;
    justify-content: space-between;
    padding: 0 14px 0 3px;
    font-size: 14.1px;
    color: #222;
}
.dialog-title svg {
    margin-top: 4px;
}
.dialog-head {
    height: 58px;
    flex: none;
    position: relative;
}
.dialog-h {
    position: absolute;
    left: 87px;
    top: 1px;
    font-family: "Noto Sans", sans-serif;
    font-weight: 700;
    font-size: 35px;
    line-height: 56px;
    color: #000;
    white-space: nowrap;
}
.dialog-n {
    position: absolute;
    left: 481px;
    top: 10px;
    font-family: "Noto Sans", sans-serif;
    font-weight: 700;
    font-size: 21px;
    line-height: 40px;
    color: #c00000;
    white-space: nowrap;
}
.dialog-body {
    flex: 1;
    background: #16698b;
    padding: 80px 0 0 0;
    display: flex;
    flex-direction: column;
    gap: 32px;
}
.form-row {
    height: 38px;
    display: flex;
    align-items: center;
    font-family: "Open Sans", sans-serif;
    font-size: 18px;
    color: #fff;
}
.form-row label {
    width: 230px;
    flex: none;
    text-align: right;
    white-space: nowrap;
}
.lb-desc { padding-right: 27px; padding-top: 4px; }
.lb-unit { padding-right: 20px; padding-top: 4px; font-size: 18.3px; }
.lb-price { padding-right: 23px; padding-top: 6px; font-size: 19.6px; }
.inp {
    width: 360px;
    height: 38px;
    background: #fff;
}
.inp.short {
    width: 279px;
}
.combo {
    width: 279px;
    height: 38px;
    background: #fff;
    position: relative;
    border: 1px solid #dfe9ee;
    z-index: 2;
}
.text-cursor {
    position: absolute;
    left: 12px;
    top: 3px;
    width: 1px;
    height: 26px;
    background: #000;
}
.combo-btn {
    position: absolute;
    right: 0;
    top: 0;
    width: 21px;
    height: 36px;
    background: #f0f0f0;
    border: 1px solid #fff;
    border-right-color: #777;
    border-bottom-color: #777;
    display: flex;
    align-items: center;
    justify-content: center;
}
.combo-btn i {
    border-left: 4px solid transparent;
    border-right: 4px solid transparent;
    border-top: 5px solid #000;
}
.combo-list {
    position: absolute;
    left: -1px;
    top: 36px;
    width: 279px;
    height: 80px;
    margin: 0;
    padding: 0;
    list-style: none;
    background: #fff;
    border: 1px solid #000;
    font-family: "Noto Sans", sans-serif;
    font-size: 19px;
    font-weight: 500;
    color: #000;
}
.combo-list li {
    height: 26px;
    line-height: 26px;
    padding-left: 12px;
}
.combo-list li.sel {
    background: #0078d7;
    color: #fff;
    outline: 1px dotted #000;
    outline-offset: -1px;
}
.dialog-btns {
    margin-top: 30px;
    display: flex;
    gap: 35px;
    padding-left: 190px;
}
.dlg-btn {
    width: 125px;
    height: 42px;
    border: 2px solid #fff;
    border-right-color: #8fa9b5;
    border-bottom-color: #8fa9b5;
    color: #fff;
    font-family: "Noto Sans", sans-serif;
    font-weight: 700;
    font-size: 15px;
    line-height: 35px;
    text-align: center;
}
```
